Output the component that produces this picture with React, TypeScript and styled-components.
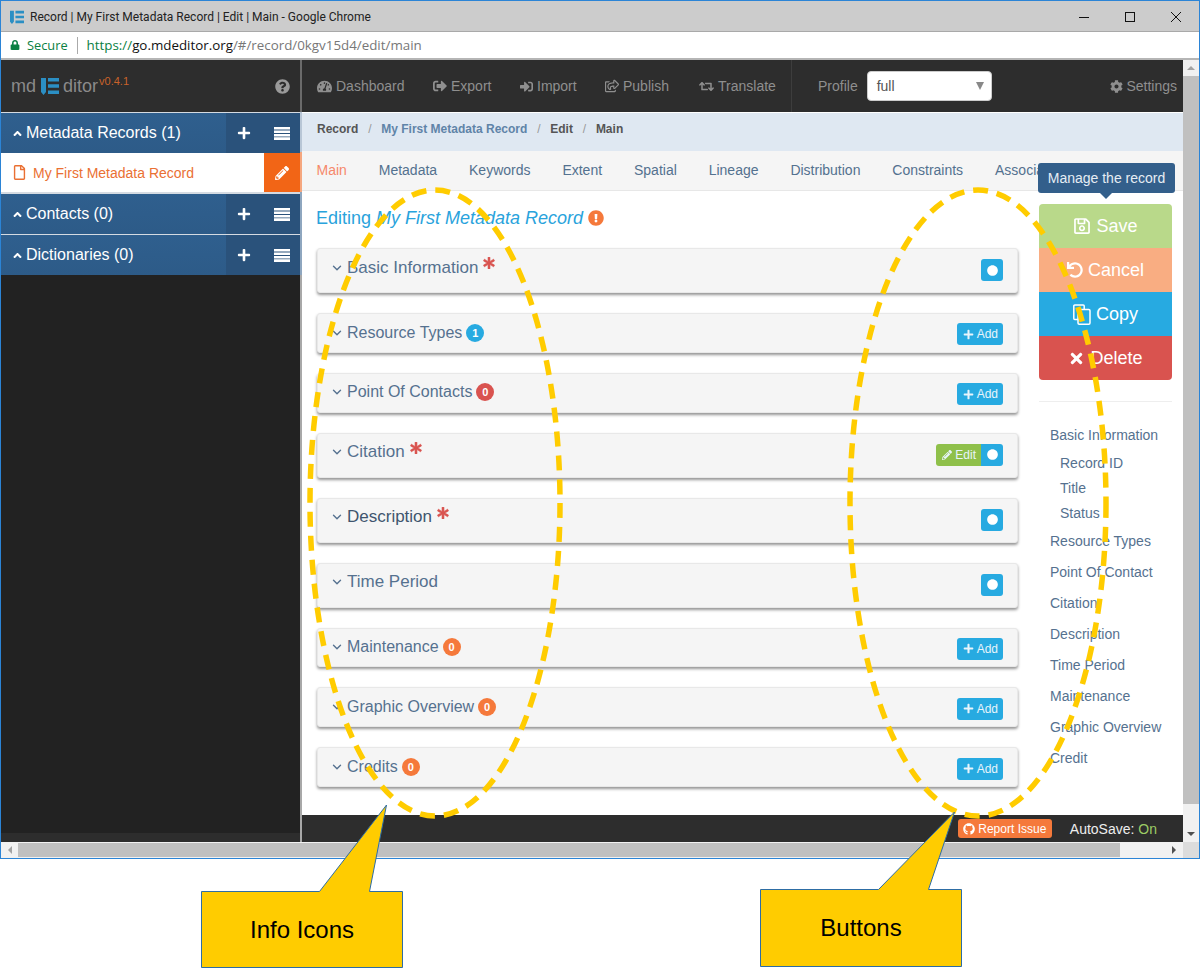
import React from "react";
import styled, { createGlobalStyle } from "styled-components";
import { ChevronDown } from "lucide-react";
import {
  FaAngleUp,
  FaAsterisk,
  FaCircle,
  FaCog,
  FaExclamationCircle,
  FaGithub,
  FaLock,
  FaPencilAlt,
  FaPlus,
  FaQuestionCircle,
  FaRegFile,
  FaRegSave,
  FaRegShareSquare,
  FaRetweet,
  FaSignInAlt,
  FaSignOutAlt,
  FaTachometerAlt,
  FaTimes,
  FaUndo,
} from "react-icons/fa";

const GlobalStyle = createGlobalStyle`
  html, body { margin: 0; padding: 0; background: #fff; }
  body { font-family: "Liberation Sans", Arial, sans-serif; overflow: hidden; }
  * { box-sizing: border-box; }
`;

const Page = styled.div`
  position: relative;
  width: 1200px;
  height: 968px;
  overflow: hidden;
  background: #fff;
`;

const Window = styled.div`
  width: 1200px;
  height: 859px;
  border: 1px solid #2b84d6;
  display: flex;
  flex-direction: column;
`;

const TitleBar = styled.div`
  height: 31px;
  flex: none;
  background: #cccccc;
  border-bottom: 1px solid #a9a9a9;
  display: flex;
  align-items: center;
  padding: 1px 0 0 9px;
  font: 12px Roboto, sans-serif;
  color: #222;
`;

const TitleText = styled.span`
  margin-left: 6px;
  flex: 1;
`;

const WinButton = styled.div`
  width: 46px;
  display: flex;
  justify-content: center;
  color: #111;
`;

const AddressBar = styled.div`
  height: 28px;
  flex: none;
  background: #fff;
  border-bottom: 2px solid #b5b5b5;
  display: flex;
  align-items: center;
  padding-left: 9px;
  font: 13px "Open Sans", sans-serif;
  color: #777;
`;

const Secure = styled.span`
  color: #0b8043;
  margin-left: 7px;
  font-size: 12.8px;
  padding-right: 9px;
  border-right: 1px solid #aaa;
  line-height: 17px;
  margin-right: 9px;
`;

const Url = styled.span`
  font-size: 13.35px;
`;

const Scheme = styled.span`
  color: #0b8043;
`;

const Host = styled.span`
  color: #111;
`;

const AppRow = styled.div`
  flex: 1;
  display: flex;
  min-height: 0;
`;

const Sidebar = styled.aside`
  width: 299px;
  flex: none;
  background: #222222;
  display: flex;
  flex-direction: column;
`;

const Brand = styled.div`
  height: 52px;
  flex: none;
  background: #2d2d2d;
  display: flex;
  align-items: center;
  padding: 0 10px 0 10px;
  color: #8a8a8a;
  font-size: 18px;
`;

const BrandMark = styled.span`
  display: flex;
  margin: 0 4px 0 5px;
`;

const Version = styled.span`
  color: #c9622a;
  font-size: 11px;
  margin-left: 1px;
  align-self: center;
  transform: translateY(-5px);
`;

const BrandSpacer = styled.div`
  flex: 1;
`;

const PanelHead = styled.div`
  height: 41px;
  flex: none;
  display: flex;
  align-items: stretch;
  border-top: 1px solid #d5dbe2;
  background: linear-gradient(#2f5f8e, #2d5b88);
  color: #fff;
  font-size: 16px;
`;

const PanelTitle = styled.div`
  flex: 1;
  display: flex;
  align-items: center;
  gap: 2px;
  padding-left: 10px;
`;

const PanelActions = styled.div`
  width: 74px;
  background: #2a527b;
  display: flex;
  align-items: center;
  justify-content: space-between;
  padding: 0 10px 0 11px;
`;

const RecordRow = styled.div`
  height: 40px;
  flex: none;
  background: #fff;
  display: flex;
  align-items: center;
  padding-left: 11px;
  color: #ea7033;
  font-size: 14px;
  gap: 6px;
  border-bottom: 1px solid #d5dbe2;
`;

const RecordName = styled.span`
  flex: 1;
`;

const RecordEdit = styled.div`
  width: 36px;
  height: 100%;
  background: #f26516;
  color: #fff;
  display: flex;
  align-items: center;
  justify-content: center;
`;

const SidebarFill = styled.div`
  flex: 1;
`;

const SidebarFoot = styled.div`
  height: 9px;
  background: #2d2d2d;
`;

const Separator = styled.div`
  width: 2px;
  flex: none;
  background: linear-gradient(
    #6a6a6a 0 52px,
    #b8c6d6 52px 92px,
    #f5a77f 92px 132px,
    #8ea6bf 132px 215px,
    #a8a8a8 215px
  );
`;

const Main = styled.main`
  width: 881px;
  flex: none;
  display: flex;
  flex-direction: column;
  background: #fff;
`;

const TopNav = styled.nav`
  height: 52px;
  flex: none;
  background: #2d2d2d;
  display: flex;
  align-items: center;
  padding: 0 6px 0 15px;
  color: #8f8f8f;
  font-size: 14px;
`;

const NavItem = styled.span<{ $w: number }>`
  width: ${(p) => p.$w}px;
  display: flex;
  align-items: center;
  gap: 4px;
  flex: none;
`;

const NavDivider = styled.div`
  width: 1px;
  height: 52px;
  background: #3d3d3d;
  margin-right: 26px;
  margin-left: 4px;
`;

const SelectBox = styled.div`
  width: 125px;
  height: 30px;
  margin-left: 9px;
  background: #fff;
  border: 1px solid #ccc;
  border-radius: 4px;
  color: #555;
  display: flex;
  align-items: center;
  justify-content: space-between;
  padding: 0 7px 0 9px;
`;

const SelectArrow = styled.div`
  width: 0;
  height: 0;
  border-left: 4px solid transparent;
  border-right: 4px solid transparent;
  border-top: 8px solid #888;
`;

const Settings = styled.span`
  margin-left: auto;
  display: flex;
  align-items: center;
  gap: 3px;
`;

const Breadcrumb = styled.div`
  height: 38px;
  flex: none;
  margin-top: 1px;
  background: #dfe8f2;
  display: flex;
  align-items: flex-start;
  padding: 9px 0 0 15px;
  font-size: 12px;
  font-weight: bold;
  color: #555;
`;

const Crumb = styled.span<{ $link?: boolean }>`
  color: ${(p) => (p.$link ? "#5f84a8" : "#555")};
`;

const CrumbSlash = styled.span`
  color: #999;
  font-weight: normal;
  margin: 0 9.8px;
`;

const Tabs = styled.div`
  height: 40px;
  flex: none;
  background: #f5f5f5;
  border-bottom: 1px solid #e7e7e7;
  display: flex;
  align-items: center;
  padding: 0 0 2px 14.5px;
  gap: 31.9px;
  font-size: 14px;
  color: #53718f;
  white-space: nowrap;
  overflow: hidden;
`;

const Tab = styled.span<{ $active?: boolean }>`
  color: ${(p) => (p.$active ? "#f5886b" : "#53718f")};
`;

const Body = styled.div`
  flex: 1;
  min-height: 0;
  display: flex;
  padding-left: 15px;
`;

const Form = styled.section`
  width: 701px;
  flex: none;
`;

const Heading = styled.h3`
  margin: 15px 0 18px -1px;
  height: 24px;
  font-size: 18px;
  line-height: 24px;
  font-weight: normal;
  color: #29a3dc;
  display: flex;
  align-items: center;
  gap: 5px;
  white-space: pre;
`;

const Card = styled.div<{ $tall?: boolean }>`
  height: ${(p) => (p.$tall ? "45px" : "39.8px")};
  margin-bottom: 20px;
  background: #f5f5f5;
  border: 1px solid #e8e8e8;
  border-radius: 3px;
  box-shadow: 0 2px 3px rgba(0, 0, 0, 0.42);
  display: flex;
  align-items: flex-start;
  justify-content: space-between;
  padding: 0 14px 0 12px;
`;

const CardTitle = styled.div<{ $dark?: boolean; $tall?: boolean }>`
  height: 37px;
  display: flex;
  align-items: center;
  font-size: ${(p) => (p.$tall ? "17px" : "16px")};
  color: ${(p) => (p.$dark ? "#3f556e" : "#55718f")};
  gap: 4px;
`;

const Chevron = styled(ChevronDown)`
  color: #55718f;
  flex: none;
  margin-right: -1px;
`;

const Star = styled(FaAsterisk)`
  color: #d9534f;
  font-size: 12px;
  margin: -9px 0 0 1px;
  stroke: #d9534f;
  stroke-width: 24px;
`;

const Badge = styled.span<{ $color: string }>`
  width: 18px;
  height: 18px;
  border-radius: 50%;
  background: ${(p) => p.$color};
  color: #fff;
  font-size: 11px;
  font-weight: bold;
  display: flex;
  align-items: center;
  justify-content: center;
`;

const BtnGroup = styled.div<{ $tall?: boolean }>`
  display: flex;
  margin-top: ${(p) => (p.$tall ? "10px" : "9.4px")};
`;

const SmallBtn = styled.div<{ $color: string; $side?: "left" | "right" }>`
  height: 22px;
  padding: 0 5px 0 6px;
  background: ${(p) => p.$color};
  color: #e8f4fb;
  font-size: 12px;
  display: flex;
  align-items: center;
  gap: 3px;
  border-radius: ${(p) =>
    p.$side === "left" ? "3px 0 0 3px" : p.$side === "right" ? "0 3px 3px 0" : "3px"};
`;

const Dot = styled(SmallBtn)`
  width: 22px;
  padding: 0;
  justify-content: center;
  color: #fff;
`;

const Aside = styled.aside`
  width: 133px;
  margin-left: 21px;
  padding-top: 13px;
  flex: none;
`;

const ActionStack = styled.div`
  border-radius: 4px;
  overflow: hidden;
`;

const ActionBtn = styled.div<{ $color: string }>`
  height: 44px;
  background: ${(p) => p.$color};
  color: #fff;
  font-size: 18px;
  display: flex;
  align-items: center;
  justify-content: center;
  gap: 5px;
`;

const Rule = styled.hr`
  border: 0;
  border-top: 1px solid #eee;
  margin: 21px 0 17px;
`;

const SideLink = styled.div<{ $sub?: boolean }>`
  height: ${(p) => (p.$sub ? "25px" : "31px")};
  display: flex;
  align-items: center;
  padding-left: ${(p) => (p.$sub ? "21px" : "11px")};
  font-size: 14px;
  color: #55718f;
  white-space: nowrap;
`;

const Footer = styled.footer`
  height: 27px;
  flex: none;
  background: #2d2d2d;
  display: flex;
  align-items: center;
  justify-content: flex-end;
  padding-right: 26px;
  color: #eee;
  font-size: 14px;
`;

const ReportBtn = styled.div`
  height: 19px;
  width: 94px;
  background: #f5793b;
  border-radius: 3px;
  color: #fff;
  font-size: 12px;
  display: flex;
  align-items: center;
  justify-content: center;
  gap: 3px;
  margin-right: 18px;
`;

const OnText = styled.span`
  color: #9ccc65;
`;

const VScroll = styled.div`
  width: 16px;
  flex: none;
  background: #f1f1f1;
  display: flex;
  flex-direction: column;
  align-items: center;
`;

const HScroll = styled.div`
  height: 16px;
  flex: none;
  background: #f1f1f1;
  display: flex;
  align-items: center;
`;

const Arrow = styled.div<{ $dir: "up" | "down" | "left" | "right" }>`
  width: 0;
  height: 0;
  flex: none;
  ${(p) =>
    p.$dir === "up"
      ? "border-left:4px solid transparent;border-right:4px solid transparent;border-bottom:4px solid #a3a3a3;"
      : p.$dir === "down"
        ? "border-left:4px solid transparent;border-right:4px solid transparent;border-top:4px solid #505050;"
        : p.$dir === "left"
          ? "border-top:4px solid transparent;border-bottom:4px solid transparent;border-right:4px solid #a3a3a3;"
          : "border-top:4px solid transparent;border-bottom:4px solid transparent;border-left:4px solid #505050;"}
`;

const VThumb = styled.div`
  width: 100%;
  height: 728px;
  margin: 0 0 auto;
  background: #c0c0c0;
`;

const VEnd = styled.div`
  height: 16px;
  display: flex;
  align-items: center;
`;

const VStart = styled.div`
  height: 16px;
  display: flex;
  align-items: center;
`;

const HStart = styled.div`
  width: 17px;
  display: flex;
  justify-content: center;
`;

const HThumb = styled.div`
  width: 1102px;
  height: 14px;
  background: #c0c0c0;
`;

const HEnd = styled.div`
  flex: 1;
  display: flex;
  justify-content: flex-end;
  padding-right: 7px;
`;

const Corner = styled.div`
  width: 16px;
  height: 16px;
  background: #dcdcdc;
  flex: none;
`;

const Overlay = styled.svg`
  position: absolute;
  left: 0;
  top: 0;
  pointer-events: none;
`;

const Tooltip = styled.div`
  position: absolute;
  left: 1038px;
  top: 163px;
  width: 137px;
  height: 30px;
  background: #335f8b;
  border-radius: 3px;
  color: #e6edf4;
  font-size: 14px;
  display: flex;
  align-items: center;
  justify-content: center;
  &::after {
    content: "";
    position: absolute;
    left: 62px;
    top: 30px;
    border-left: 6px solid transparent;
    border-right: 6px solid transparent;
    border-top: 6px solid #335f8b;
  }
`;

const CalloutLabel = styled.div<{ $left: number; $top: number }>`
  position: absolute;
  left: ${(p) => p.$left}px;
  top: ${(p) => p.$top}px;
  width: 201px;
  height: 76px;
  padding: 2px 0 0 1px;
  display: flex;
  align-items: center;
  justify-content: center;
  color: #000;
  font-size: 24px;
`;

const ListIcon = () => (
  <svg width="16" height="13" viewBox="0 0 16 13">
    <path fill="#fff" d="M0 0h16v2.6H0zM0 3.4h16V6H0zM0 6.9h16v2.6H0zM0 10.3h16V13H0z" />
  </svg>
);

const AppIcon = ({ w, h }: { w: number; h: number }) => (
  <svg width={w} height={h} viewBox="0 0 18 18">
    <path fill="#2b8fc4" d="M0 1h5v14l-2.5 3L0 15zM7 1h11v3.4H7zM7 7.3h11v3.4H7zM7 13.6h11V17H7z" />
  </svg>
);

const CopyIcon = () => (
  <svg width="18" height="21" viewBox="0 0 18 21" fill="none" stroke="#fff" strokeWidth="1.5">
    <path d="M5 15.5H1.8a1 1 0 0 1-1-1V2a1 1 0 0 1 1-1h8.4a1 1 0 0 1 1 1v3" />
    <rect x="5" y="5.5" width="12" height="14.7" rx="1.2" />
  </svg>
);

const panels = [
  { title: "Metadata Records (1)", record: true },
  { title: "Contacts (0)" },
  { title: "Dictionaries (0)" },
];

type CardDef = {
  title: string;
  tall?: boolean;
  dark?: boolean;
  star?: boolean;
  badge?: { text: string; color: string };
  action: "dot" | "add" | "edit";
};

const cards: CardDef[] = [
  { title: "Basic Information", tall: true, star: true, action: "dot" },
  { title: "Resource Types", badge: { text: "1", color: "#27aae1" }, action: "add" },
  { title: "Point Of Contacts", badge: { text: "0", color: "#d9534f" }, action: "add" },
  { title: "Citation", tall: true, star: true, action: "edit" },
  { title: "Description", tall: true, dark: true, star: true, action: "dot" },
  { title: "Time Period", tall: true, action: "dot" },
  { title: "Maintenance", badge: { text: "0", color: "#f5793b" }, action: "add" },
  { title: "Graphic Overview", badge: { text: "0", color: "#f5793b" }, action: "add" },
  { title: "Credits", badge: { text: "0", color: "#f5793b" }, action: "add" },
];

const links = [
  { label: "Basic Information" },
  { label: "Record ID", sub: true },
  { label: "Title", sub: true },
  { label: "Status", sub: true },
  { label: "Resource Types" },
  { label: "Point Of Contact" },
  { label: "Citation" },
  { label: "Description" },
  { label: "Time Period" },
  { label: "Maintenance" },
  { label: "Graphic Overview" },
  { label: "Credit" },
];

const tabs = [
  "Main",
  "Metadata",
  "Keywords",
  "Extent",
  "Spatial",
  "Lineage",
  "Distribution",
  "Constraints",
  "Associations",
];

const App: React.FC = () => (
  <Page>
    <GlobalStyle />
    <Window>
      <TitleBar>
        <AppIcon w={14} h={14} />
        <TitleText>Record | My First Metadata Record | Edit | Main - Google Chrome</TitleText>
        <WinButton>
          <svg width="12" height="12" viewBox="0 0 12 12">
            <path stroke="#111" strokeWidth="1" d="M1 6.5h10" />
          </svg>
        </WinButton>
        <WinButton>
          <svg width="12" height="12" viewBox="0 0 12 12">
            <rect x="1.5" y="1.5" width="9" height="9" fill="none" stroke="#111" />
          </svg>
        </WinButton>
        <WinButton>
          <svg width="12" height="12" viewBox="0 0 12 12">
            <path stroke="#111" strokeWidth="1" d="M1 1l10 10M11 1L1 11" />
          </svg>
        </WinButton>
      </TitleBar>
      <AddressBar>
        <FaLock size={10} color="#0b8043" />
        <Secure>Secure</Secure>
        <Url>
          <Scheme>https://</Scheme>
          <Host>go.mdeditor.org</Host>/#/record/0kgv15d4/edit/main
        </Url>
      </AddressBar>
      <AppRow>
        <Sidebar>
          <Brand>
            md
            <BrandMark>
              <AppIcon w={18} h={18} />
            </BrandMark>
            ditor
            <Version>v0.4.1</Version>
            <BrandSpacer />
            <FaQuestionCircle size={15} color="#9a9a9a" />
          </Brand>
          {panels.map((panel) => (
            <React.Fragment key={panel.title}>
              <PanelHead>
                <PanelTitle>
                  <FaAngleUp size={13} />
                  {panel.title}
                </PanelTitle>
                <PanelActions>
                  <FaPlus size={14} />
                  <ListIcon />
                </PanelActions>
              </PanelHead>
              {panel.record && (
                <RecordRow>
                  <FaRegFile size={15} />
                  <RecordName>My First Metadata Record</RecordName>
                  <RecordEdit>
                    <FaPencilAlt size={14} />
                  </RecordEdit>
                </RecordRow>
              )}
            </React.Fragment>
          ))}
          <SidebarFill />
          <SidebarFoot />
        </Sidebar>
        <Separator />
        <Main>
          <TopNav>
            <NavItem $w={116}>
              <FaTachometerAlt size={15} /> Dashboard
            </NavItem>
            <NavItem $w={87}>
              <FaSignOutAlt size={14} /> Export
            </NavItem>
            <NavItem $w={85}>
              <FaSignInAlt size={13} /> Import
            </NavItem>
            <NavItem $w={94}>
              <FaRegShareSquare size={14} /> Publish
            </NavItem>
            <NavItem $w={88}>
              <FaRetweet size={15} /> Translate
            </NavItem>
            <NavDivider />
            Profile
            <SelectBox>
              full
              <SelectArrow />
            </SelectBox>
            <Settings>
              <FaCog size={13} /> Settings
            </Settings>
          </TopNav>
          <Breadcrumb>
            <Crumb>Record</Crumb>
            <CrumbSlash>/</CrumbSlash>
            <Crumb $link>My First Metadata Record</Crumb>
            <CrumbSlash>/</CrumbSlash>
            <Crumb>Edit</Crumb>
            <CrumbSlash>/</CrumbSlash>
            <Crumb>Main</Crumb>
          </Breadcrumb>
          <Tabs>
            {tabs.map((tab) => (
              <Tab key={tab} $active={tab === "Main"}>
                {tab}
              </Tab>
            ))}
          </Tabs>
          <Body>
            <Form>
              <Heading>
                <span>
                  Editing <em>My First Metadata Record</em>
                </span>
                <FaExclamationCircle size={16} color="#f5793b" />
              </Heading>
              {cards.map((card) => (
                <Card key={card.title} $tall={card.tall}>
                  <CardTitle $dark={card.dark} $tall={card.tall}>
                    <Chevron size={14} strokeWidth={2.4} />
                    {card.title}
                    {card.star && <Star />}
                    {card.badge && <Badge $color={card.badge.color}>{card.badge.text}</Badge>}
                  </CardTitle>
                  <BtnGroup $tall={card.tall}>
                    {card.action === "add" && (
                      <SmallBtn $color="#27aae1">
                        <FaPlus size={11} /> Add
                      </SmallBtn>
                    )}
                    {card.action === "edit" && (
                      <SmallBtn $color="#8fc04a" $side="left">
                        <FaPencilAlt size={10} /> Edit
                      </SmallBtn>
                    )}
                    {card.action !== "add" && (
                      <Dot $color="#27aae1" $side={card.action === "edit" ? "right" : undefined}>
                        <FaCircle size={11} />
                      </Dot>
                    )}
                  </BtnGroup>
                </Card>
              ))}
            </Form>
            <Aside>
              <ActionStack>
                <ActionBtn $color="#b9d98a">
                  <FaRegSave size={18} /> Save
                </ActionBtn>
                <ActionBtn $color="#f9ad82">
                  <FaUndo size={16} /> Cancel
                </ActionBtn>
                <ActionBtn $color="#27aae1">
                  <CopyIcon /> Copy
                </ActionBtn>
                <ActionBtn $color="#d9534f">
                  <FaTimes size={17} /> Delete
                </ActionBtn>
              </ActionStack>
              <Rule />
              {links.map((link) => (
                <SideLink key={link.label} $sub={link.sub}>
                  {link.label}
                </SideLink>
              ))}
            </Aside>
          </Body>
          <Footer>
            <ReportBtn>
              <FaGithub size={12} /> Report Issue
            </ReportBtn>
            <span>
              AutoSave: <OnText>On</OnText>
            </span>
          </Footer>
        </Main>
        <VScroll>
          <VStart>
            <Arrow $dir="up" />
          </VStart>
          <VThumb />
          <VEnd>
            <Arrow $dir="down" />
          </VEnd>
        </VScroll>
      </AppRow>
      <HScroll>
        <HStart>
          <Arrow $dir="left" />
        </HStart>
        <HThumb />
        <HEnd>
          <Arrow $dir="right" />
        </HEnd>
        <Corner />
      </HScroll>
    </Window>
    <Tooltip>Manage the record</Tooltip>
    <Overlay width="1200" height="968" viewBox="0 0 1200 968">
      <ellipse cx="435" cy="503" rx="125" ry="313" fill="none" stroke="#ffcc00" strokeWidth="5.5" strokeDasharray="15 9" />
      <ellipse cx="978" cy="503" rx="128" ry="313" fill="none" stroke="#ffcc00" strokeWidth="5.5" strokeDasharray="15 9" />
      <path
        fill="#ffcc00"
        stroke="#2e6da4"
        d="M201.5 891.5H319.5L386.5 805L369.5 891.5H402.5V967.5H201.5Z"
      />
      <path
        fill="#ffcc00"
        stroke="#2e6da4"
        d="M760.5 889.5H878.5L954.5 812L928.5 889.5H961.5V966.5H760.5Z"
      />
    </Overlay>
    <CalloutLabel $left={201} $top={891}>
      Info Icons
    </CalloutLabel>
    <CalloutLabel $left={760} $top={889}>
      Buttons
    </CalloutLabel>
  </Page>
);

export default App;
